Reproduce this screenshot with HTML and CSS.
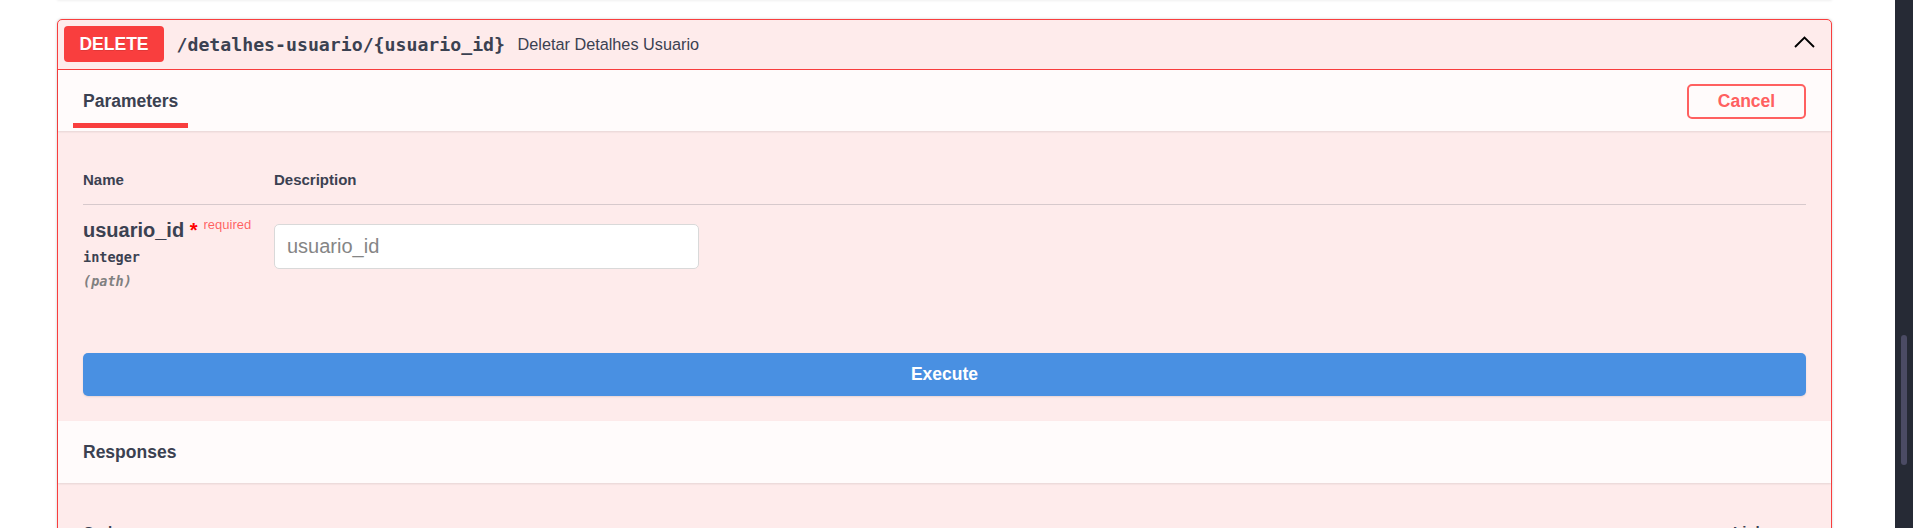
FILE: index.html
```html
<!DOCTYPE html>
<html lang="pt">
<head>
<meta charset="utf-8">
<title>Swagger UI</title>
<link rel="stylesheet" href="styles.css">
</head>
<body>
<div class="page">
  <main class="main">
    <div class="prev-block"></div>
    <section class="opblock">
      <div class="summary">
        <span class="method">DELETE</span>
        <span class="path">/detalhes-usuario/{usuario_id}</span>
        <span class="summary-desc">Deletar Detalhes Usuario</span>
        <svg class="arrow" width="21" height="12" viewBox="0 0 21 12" aria-hidden="true">
          <path d="M1 11 L10.5 1.5 L20 11" fill="none" stroke="#000" stroke-width="1.9"/>
        </svg>
      </div>

      <div class="section-header">
        <h4 class="tab-title"><span class="tab-label">Parameters</span></h4>
        <button class="btn-cancel">Cancel</button>
      </div>

      <div class="params">
        <div class="params-table">
          <div class="col-head">Name</div>
          <div class="col-head">Description</div>
          <div class="param-name-cell">
            <div class="param-name">usuario_id<span class="req-star">&nbsp;*</span><span class="req-label">required</span></div>
            <div class="param-type">integer</div>
            <div class="param-in">(path)</div>
          </div>
          <div class="param-desc-cell">
            <input class="param-input" type="text" placeholder="usuario_id">
          </div>
        </div>
      </div>

      <div class="execute-wrap">
        <button class="btn-execute">Execute</button>
      </div>

      <div class="section-header responses-header">
        <h4 class="section-title">Responses</h4>
      </div>

      <div class="responses">
        <div class="resp-head">
          <span class="resp-col">Code</span>
          <span class="resp-col">Links</span>
        </div>
        <div class="resp-row">
          <span class="resp-code">200</span>
          <span class="resp-desc">Successful Response</span>
        </div>
      </div>
    </section>
  </main>
  <div class="scrollbar"><div class="thumb"></div></div>
</div>
</body>
</html>
```
FILE: styles.css
```css
* { box-sizing: border-box; }

html, body {
  margin: 0;
  padding: 0;
  background: #ffffff;
}

body {
  font-family: "Liberation Sans", Arial, sans-serif;
  color: #3b4151;
}

.page {
  display: flex;
  width: 1913px;
  height: 528px;
  overflow: hidden;
}

.main {
  flex: 1;
  padding-left: 57px;
}

.prev-block {
  width: 1775px;
  height: 1px;
  margin-top: -1px;
  background: #ffffff;
  box-shadow: 0 0 3px rgba(0, 0, 0, 0.19);
}

.opblock {
  width: 1775px;
  margin-top: 19px;
  border: 1px solid #f93e3e;
  border-radius: 5px;
  background: #feebeb;
  box-shadow: 0 0 3px rgba(0, 0, 0, 0.19);
}

/* summary row */
.summary {
  display: flex;
  align-items: center;
  height: 50px;
  padding: 6px 6px 7px;
  border-bottom: 1px solid #f93e3e;
}

.method {
  display: flex;
  align-items: center;
  justify-content: center;
  min-width: 100px;
  height: 36px;
  background: #f93e3e;
  color: #ffffff;
  font-weight: 700;
  font-size: 17.5px;
  border-radius: 4px;
  text-shadow: 0 1px 0 rgba(0, 0, 0, 0.1);
}

.path {
  font-family: "DejaVu Sans Mono", "Liberation Mono", monospace;
  font-weight: 700;
  font-size: 18.2px;
  padding: 0 12.5px;
  color: #3b4151;
}

.summary-desc {
  flex: 1;
  font-size: 16.25px;
  color: #3b4151;
}

.arrow {
  margin-right: 10px;
  margin-bottom: 4px;
}

/* section header (tabs) */
.section-header {
  display: flex;
  align-items: center;
  justify-content: space-between;
  height: 61px;
  padding: 0 25px;
  background: rgba(255, 255, 255, 0.8);
  box-shadow: 0 1px 2px rgba(0, 0, 0, 0.1);
}

.tab-title,
.section-title {
  margin: 0;
  font-size: 17.5px;
  font-weight: 700;
  line-height: 20px;
  color: #3b4151;
}

.tab-label {
  position: relative;
  display: inline-block;
}

.tab-label::after {
  content: "";
  position: absolute;
  left: -10px;
  right: -10px;
  bottom: -17px;
  height: 5px;
  background: #f93e3e;
}

.btn-cancel {
  width: 119px;
  height: 35px;
  margin-top: 2px;
  border: 2px solid #ff6060;
  border-radius: 5px;
  background: transparent;
  color: #ff6060;
  font-family: "Liberation Sans", Arial, sans-serif;
  font-weight: 700;
  font-size: 17.5px;
  padding: 0;
}

/* parameters */
.params {
  padding: 25px 25px 26px;
}

.params-table {
  display: grid;
  grid-template-columns: 191px 1fr;
}

.col-head {
  padding: 15px 0;
  font-size: 15px;
  line-height: 18px;
  font-weight: 700;
  border-bottom: 1px solid rgba(59, 65, 81, 0.2);
}

.param-name-cell {
  padding: 7.5px 0 12.5px;
}

.param-desc-cell {
  padding: 12.5px 0;
}

.param-name {
  font-size: 20px;
  line-height: 23px;
  font-weight: 700;
  white-space: nowrap;
}

.req-star {
  color: #ff0000;
  font-size: 20px;
}

.req-label {
  color: rgba(255, 0, 0, 0.6);
  font-size: 13px;
  font-weight: 400;
  padding: 0 6px;
  vertical-align: 8px;
}

.param-type {
  padding: 6.25px 0;
  font-family: "DejaVu Sans Mono", "Liberation Mono", monospace;
  font-weight: 700;
  font-size: 13.5px;
  line-height: 18px;
  color: #3b4151;
}

.param-in {
  font-family: "DejaVu Sans Mono", "Liberation Mono", monospace;
  font-weight: 700;
  font-style: italic;
  font-size: 13.5px;
  line-height: 18px;
  color: #808080;
}

.param-input {
  display: block;
  width: 425px;
  height: 45px;
  margin: 6px 0;
  padding: 0 12px;
  border: 1px solid #d9d9d9;
  border-radius: 5px;
  background: #ffffff;
  font-family: "Liberation Sans", Arial, sans-serif;
  font-size: 20px;
  color: #3b4151;
}

.param-input::placeholder {
  color: #858585;
}

/* execute */
.execute-wrap {
  padding: 24.5px 25px 25px;
}

.btn-execute {
  display: block;
  width: 100%;
  height: 43px;
  border: none;
  border-radius: 5px;
  background: #4990e2;
  color: #ffffff;
  font-family: "Liberation Sans", Arial, sans-serif;
  font-weight: 700;
  font-size: 17.5px;
  box-shadow: 0 1px 2px rgba(0, 0, 0, 0.1);
}

/* responses */
.responses-header {
  height: 62px;
}

.responses {
  padding: 25px 25px 40px;
}

.resp-head {
  display: grid;
  grid-template-columns: 1650px 1fr;
  padding-top: 15px;
  padding-bottom: 15px;
  border-bottom: 1px solid rgba(59, 65, 81, 0.2);
}

.resp-col {
  font-size: 15px;
  line-height: 18px;
  font-weight: 700;
}

.resp-row {
  display: grid;
  grid-template-columns: 191px 1fr;
  padding: 15px 0;
  font-size: 17.5px;
}

.resp-code {
  font-weight: 700;
}

/* fake scrollbar */
.scrollbar {
  width: 18px;
  height: 528px;
  background: #262a35;
  padding-top: 335px;
  display: flex;
  justify-content: center;
}

.thumb {
  width: 6px;
  height: 130px;
  border-radius: 3px;
  background: #4b4b64;
}
```
